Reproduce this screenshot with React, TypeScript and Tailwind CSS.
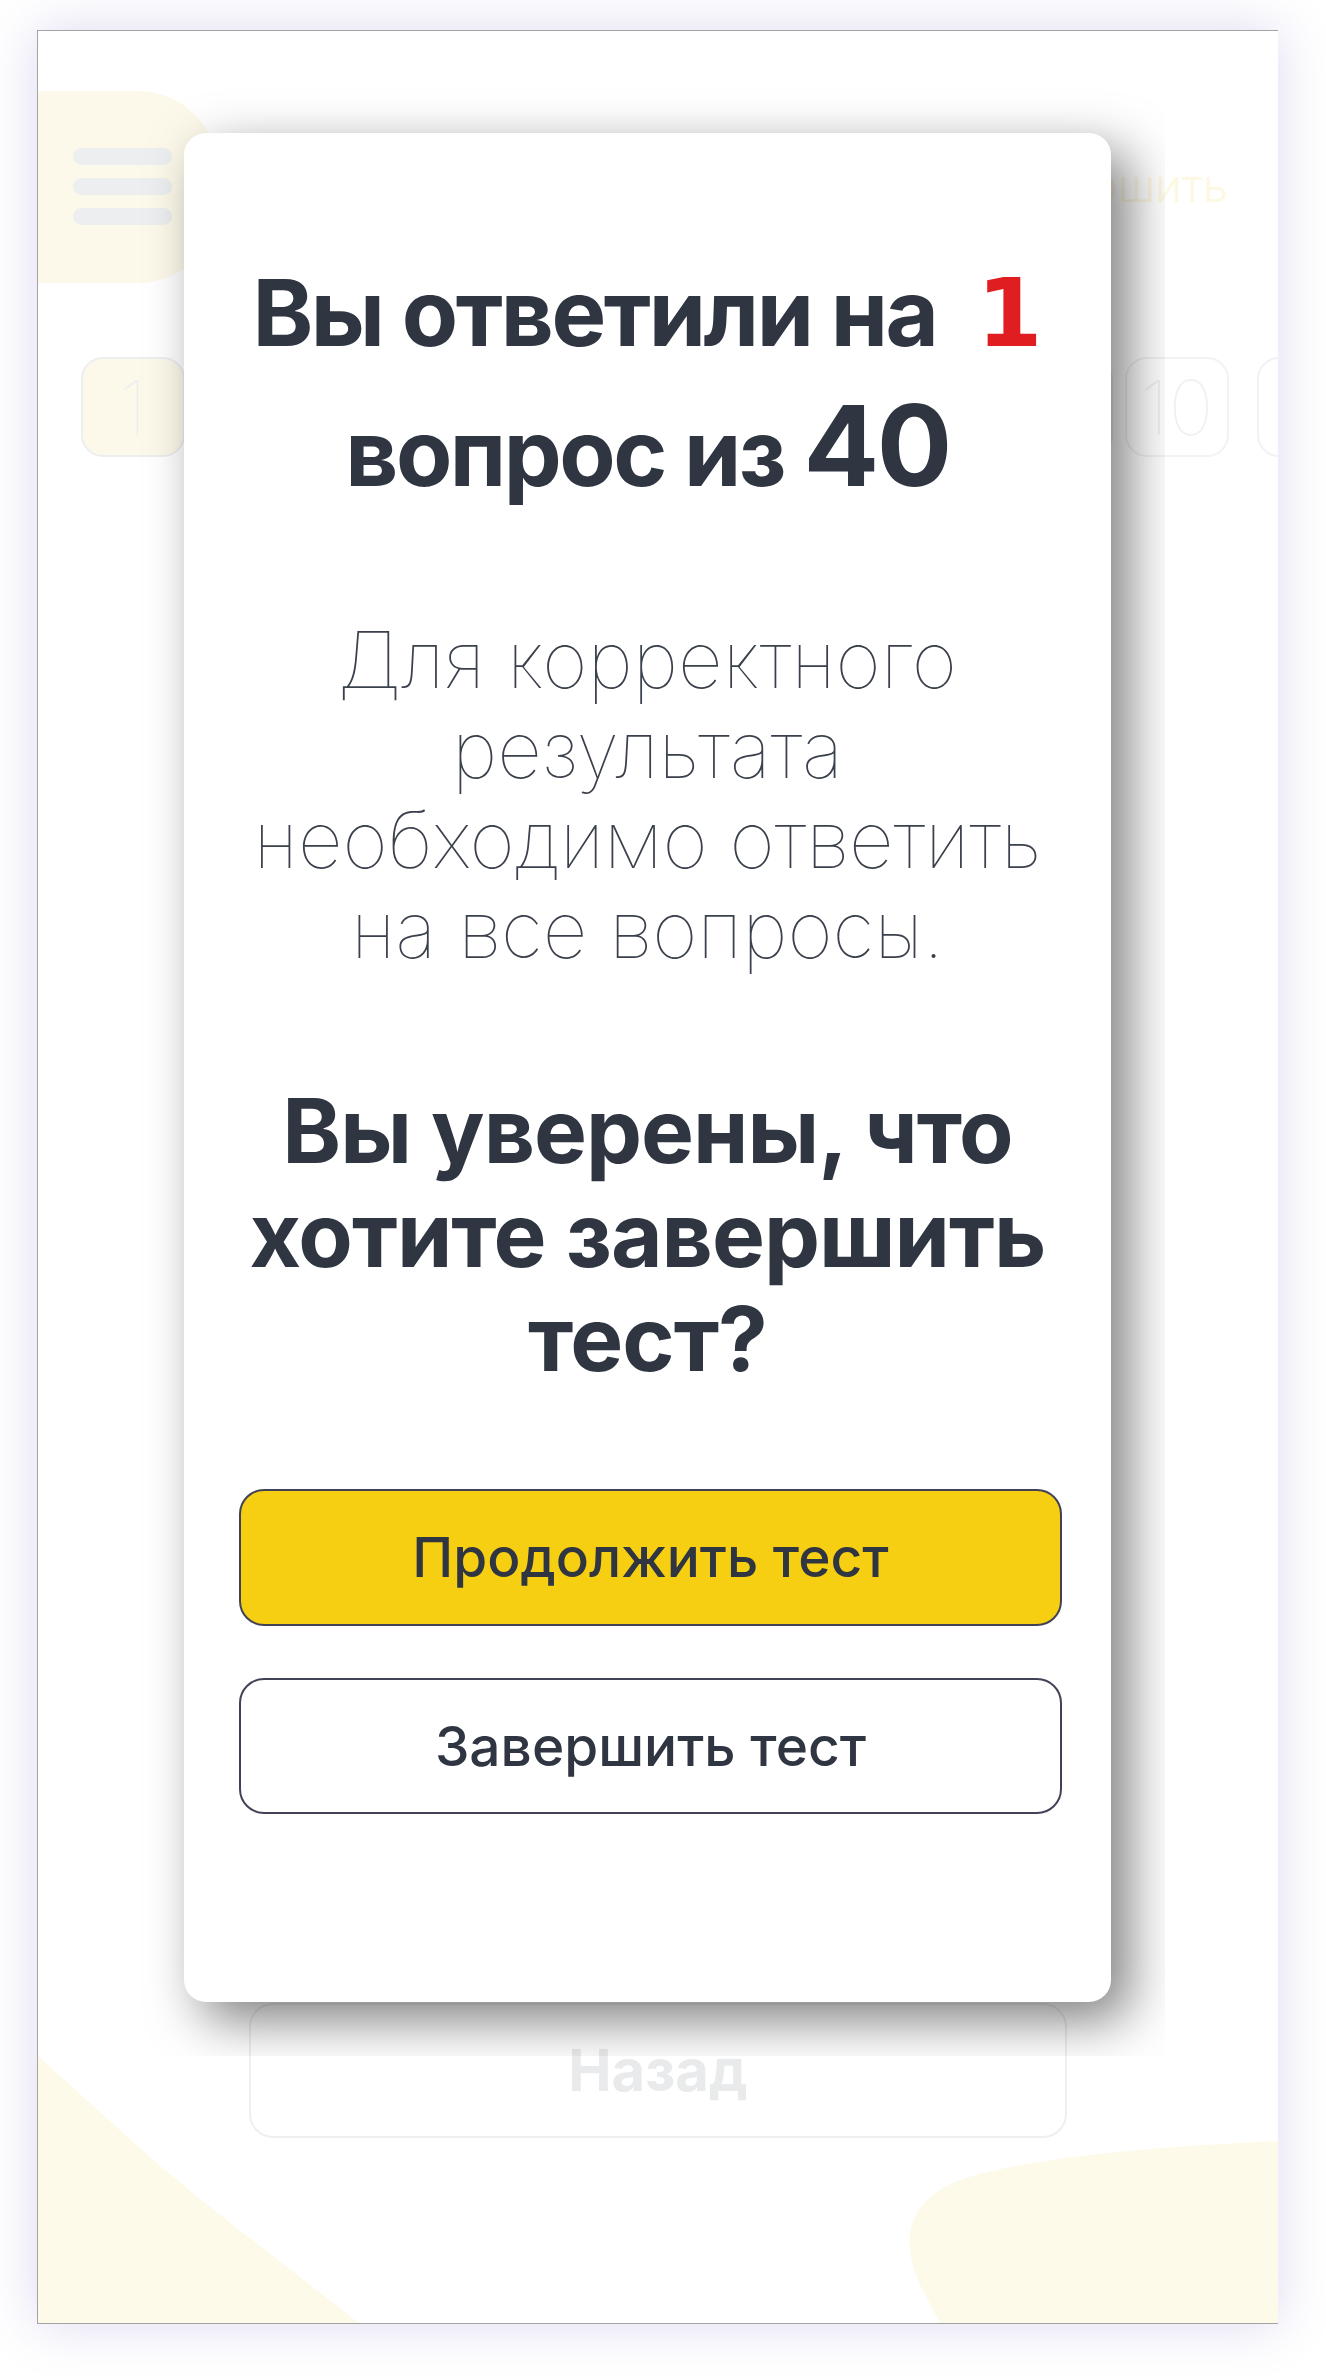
import React from 'react';

const NUMBERS = [1, 2, 3, 4, 5, 6, 7, 8, 9, 10];

const font = { fontFamily: 'Inter, "Noto Sans", sans-serif' };

const Backdrop = () => (
  <div className="relative w-full h-full">
    {/* decorative blobs */}
    <svg className="absolute inset-0" width="1241" height="2294" viewBox="37 30 1241 2294">
      <path d="M37,2055 L150,2157 C230,2225 300,2275 360,2324 L37,2324 Z" fill="#fefae9" />
      <path d="M1278,2140 C1150,2146 1000,2158 945,2185 C900,2210 902,2250 922,2290 L940,2324 L1278,2324 Z" fill="#fefae9" />
    </svg>

    <div className="relative pt-[60px] flex items-center justify-between pr-[50px]">
      <div className="w-[180px] h-[192px] bg-[#fdf9ea] rounded-r-[80px] flex flex-col gap-[13px] pl-[35px] pt-[57px]">
        <div className="w-[99px] h-[17px] rounded-full bg-[#eceef0]" />
        <div className="w-[99px] h-[17px] rounded-full bg-[#eceef0]" />
        <div className="w-[99px] h-[17px] rounded-full bg-[#eceef0]" />
      </div>
      <span className="text-[46px] font-light text-[#fdf8e2] -mt-[4px]">Завершить</span>
    </div>

    <div className="relative mt-[74px] pl-[43px] flex gap-[12px]">
      {NUMBERS.map(n => (
        <div
          key={n}
          className={
            n === 1
              ? 'shrink-0 w-[104px] h-[100px] rounded-[22px] border-2 border-[#eceef0] bg-[#fdf9ea] flex items-center justify-center text-[76px] font-thin text-[#eceef0]'
              : 'shrink-0 w-[104px] h-[100px] rounded-[22px] border-2 border-[#f1f2f4] bg-white flex items-center justify-center text-[76px] font-thin text-[#eef0f2]'
          }
        >
          {n}
        </div>
      ))}
      <div className="shrink-0 ml-[16px] w-[104px] h-[100px] rounded-[22px] border-2 border-[#f1f2f4] bg-white" />
    </div>

    <div className="absolute left-[211px] top-[1972px] w-[818px] h-[135px] rounded-[24px] border-2 border-[#efefef] flex items-center justify-center text-[58px] font-bold text-[#e9eaec]">
      Назад
    </div>
  </div>
);

export default function App() {
  return (
    <div className="w-[1326px] h-[2379px] bg-white pt-[30px] pl-[37px]" style={font}>
      <div className="relative w-[1241px] h-[2294px] bg-white border-t border-l border-b border-[#a3a3a3] overflow-hidden shadow-[0_0_50px_rgba(95,85,190,0.22)]">
        <Backdrop />

        <div className="absolute left-[92px] top-[48px] w-[1035px] h-[1977px] p-[54px] overflow-hidden">
          <div className="w-full h-full bg-white rounded-[22px] shadow-[18px_18px_52px_rgba(0,0,0,0.5)] flex flex-col items-center text-center text-[#2f3642]">
            <h1 className="mt-[110px] text-[92px] leading-[140px] font-bold tracking-[-2.5px]">
              <span className="block">
                Вы ответили на
                <span className="ml-[40px] text-[95px] leading-none tracking-normal font-bold text-[#e01e22] font-['DejaVu_Sans',sans-serif]">1</span>
              </span>
              <span className="block">
                вопрос из <span className="text-[112px] leading-none">40</span>
              </span>
            </h1>

            <p className="mt-[92px] text-[78px] leading-[90px] font-thin text-[#3b414c] px-[40px]">
              Для корректного
              <br />
              результата
              <br />
              необходимо ответить
              <br />
              на все вопросы.
            </p>

            <h2 className="mt-[104px] text-[89px] leading-[104px] font-bold tracking-[-1px]">
              Вы уверены, что
              <br />
              хотите завершить
              <br />
              тест?
            </h2>

            <div className="mt-[98px] self-stretch ml-[55px] mr-[49px] flex flex-col gap-[52px]">
              <button className="h-[137px] rounded-[25px] border-2 border-[#424257] bg-[#f6ce12] text-[55px] font-medium text-[#2f3642]">
                Продолжить тест
              </button>
              <button className="h-[136px] rounded-[25px] border-2 border-[#424257] bg-white text-[55px] font-medium text-[#2f3642]">
                Завершить тест
              </button>
            </div>
          </div>
        </div>
      </div>
    </div>
  );
}
